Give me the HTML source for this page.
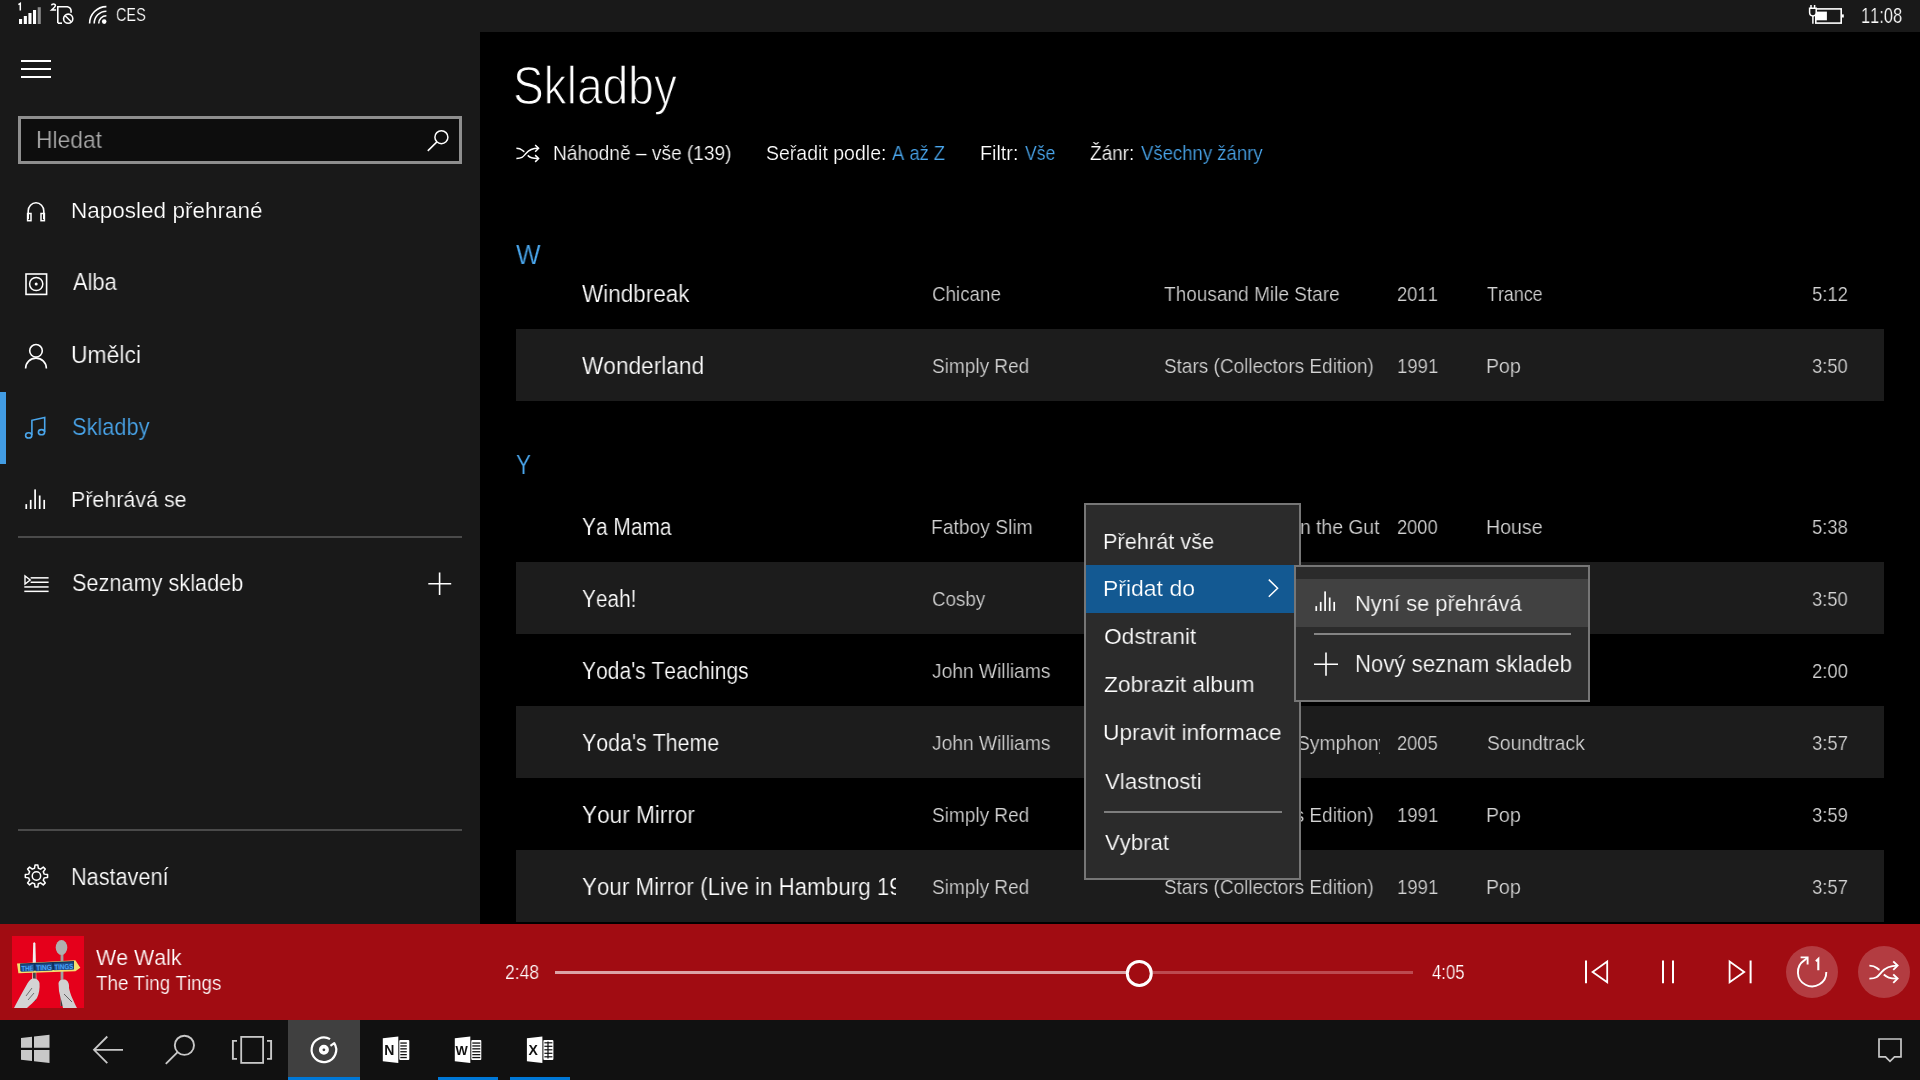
<!DOCTYPE html>
<html><head><meta charset="utf-8"><title>Skladby</title>
<style>
html,body{margin:0;padding:0;}
body{width:1920px;height:1080px;background:#000;position:relative;overflow:hidden;font-family:"Liberation Sans",sans-serif;}
.t{position:absolute;white-space:nowrap;line-height:1;transform-origin:0 0;will-change:transform;font-kerning:none;}
.r{position:absolute;}
.s{position:absolute;overflow:visible;}
.clip{position:absolute;overflow:hidden;}
</style></head><body>
<div class="r" style="left:0px;top:0px;width:1920px;height:32px;background:#191919;"></div>
<div class="r" style="left:0px;top:32px;width:480px;height:892px;background:#191919;"></div>
<div class="r" style="left:0px;top:924px;width:1920px;height:96px;background:#a10c12;"></div>
<div class="r" style="left:0px;top:1020px;width:1920px;height:60px;background:#111111;"></div>
<svg class="s" style="left:0px;top:0px;" width="160" height="32" viewBox="0 0 160 32"><rect x="19" y="19" width="3.1" height="5" fill="#fff"/><rect x="23.8" y="16" width="3.1" height="8" fill="#fff"/><rect x="28.4" y="13" width="3.1" height="11" fill="#fff"/><rect x="33" y="10" width="3.1" height="14" fill="#fff"/><rect x="37.7" y="7.2" width="3.1" height="16.8" fill="#8a8a8a"/><path d="M57.8 23.0 V6.8 H67.4 Q71.1 7.6 71.1 11.2 V12.8" fill="none" stroke="#fff" stroke-width="1.6"/><path d="M57.8 23.2 H62" fill="none" stroke="#fff" stroke-width="1.6"/><circle cx="68.2" cy="18.7" r="4.6" fill="none" stroke="#fff" stroke-width="1.6"/><path d="M65.2 15.7 L71.2 21.7" stroke="#fff" stroke-width="1.6"/><path d="M89.6 23.4 A16.8 16.8 0 0 1 106.4 6.6" fill="none" stroke="#fff" stroke-width="1.6"/><path d="M94.2 23.4 A12.2 12.2 0 0 1 106.4 11.2" fill="none" stroke="#fff" stroke-width="1.6"/><path d="M98.7 23.4 A7.7 7.7 0 0 1 106.4 15.7" fill="none" stroke="#fff" stroke-width="1.6"/><circle cx="104.2" cy="21.6" r="2.3" fill="#fff"/></svg>
<svg class="s" style="left:0px;top:0px;" width="80" height="16" viewBox="0 0 80 16"><path d="M18.4 4.6 L20.3 3.3 V10.5" fill="none" stroke="#fff" stroke-width="1.5"/><path d="M51.5 5.4 C51.8 3.6 55.4 3.3 55.4 5.6 C55.4 7 53.6 8.3 51.6 10 H56.1" fill="none" stroke="#fff" stroke-width="1.5"/></svg>
<div class="t" style="left:115.86px;top:6.12px;font-size:18.17px;color:#fff;transform:scaleX(0.7977);-webkit-text-stroke:0.22px #191919;">CES</div>
<svg class="s" style="left:1800px;top:0px;" width="50" height="32" viewBox="0 0 50 32"><rect x="1815.8" y="8.9" width="25.4" height="14.2" fill="none" stroke="#fff" stroke-width="1.6" transform="translate(-1800 0)"/><rect x="42" y="14.4" width="1.8" height="3.1" fill="#fff"/><rect x="15.3" y="11.6" width="11.6" height="8.7" fill="#fff"/><path d="M9.6 8.2 H16.2 V12.6 A3.3 3.3 0 0 1 9.6 12.6 Z" fill="#191919" stroke="#fff" stroke-width="1.5"/><path d="M11 5 V8.2 M14.6 5 V8.2 M12.9 15.8 V23.8" stroke="#fff" stroke-width="1.5"/></svg>
<div class="t" style="left:1860.75px;top:4.64px;font-size:21.80px;color:#fff;transform:scaleX(0.7546);-webkit-text-stroke:0.22px #191919;">11:08</div>
<div class="r" style="left:21px;top:60px;width:30px;height:2px;background:#fff;"></div>
<div class="r" style="left:21px;top:68px;width:30px;height:2px;background:#fff;"></div>
<div class="r" style="left:21px;top:76px;width:30px;height:2px;background:#fff;"></div>
<div class="r" style="left:18px;top:116px;width:444px;height:48px;background:#0d0d0d;box-sizing:border-box;border:3px solid #8e8e8e;"></div>
<div class="t" style="left:35.63px;top:127.82px;font-size:23.84px;color:#a8a8a8;transform:scaleX(0.9585);-webkit-text-stroke:0.22px #0d0d0d;">Hledat</div>
<svg class="s" style="left:420px;top:120px;" width="40" height="40" viewBox="0 0 40 40"><circle cx="21.4" cy="17.2" r="6.5" fill="none" stroke="#fff" stroke-width="1.5"/><path d="M16.9 21.9 L7.8 30.9" stroke="#fff" stroke-width="1.5"/></svg>
<div class="t" style="left:70.75px;top:200.22px;font-size:22.53px;color:#fff;transform:scaleX(0.9990);-webkit-text-stroke:0.22px #191919;">Naposled přehrané</div>
<div class="t" style="left:72.56px;top:271.24px;font-size:23.69px;color:#fff;transform:scaleX(0.9225);-webkit-text-stroke:0.22px #191919;">Alba</div>
<div class="t" style="left:70.83px;top:342.69px;font-size:23.98px;color:#fff;transform:scaleX(0.9554);-webkit-text-stroke:0.22px #191919;">Umělci</div>
<div class="t" style="left:71.61px;top:414.82px;font-size:23.84px;color:#4aa6ec;transform:scaleX(0.9155);-webkit-text-stroke:0.22px #191919;">Skladby</div>
<div class="t" style="left:70.84px;top:487.68px;font-size:22.82px;color:#fff;transform:scaleX(0.9397);-webkit-text-stroke:0.22px #191919;">Přehrává se</div>
<div class="r" style="left:0px;top:392px;width:6px;height:72px;background:#429ce3;"></div>
<svg class="s" style="left:16px;top:190px;" width="40" height="40" viewBox="0 0 40 40"><path d="M12.2 29 V21 A7.8 8.2 0 0 1 27.8 21 V29" fill="none" stroke="#fff" stroke-width="1.6"/><rect x="11.6" y="23.5" width="3.4" height="7.2" fill="none" stroke="#fff" stroke-width="1.5"/><rect x="25" y="23.5" width="3.4" height="7.2" fill="none" stroke="#fff" stroke-width="1.5"/></svg>
<svg class="s" style="left:16px;top:264px;" width="40" height="40" viewBox="0 0 40 40"><rect x="10" y="10" width="20.6" height="20.4" fill="none" stroke="#fff" stroke-width="1.6"/><circle cx="20.2" cy="20" r="6.6" fill="none" stroke="#fff" stroke-width="1.5"/><circle cx="20.2" cy="20" r="1.5" fill="#fff"/></svg>
<svg class="s" style="left:16px;top:336px;" width="40" height="40" viewBox="0 0 40 40"><circle cx="20" cy="14.8" r="6.3" fill="none" stroke="#fff" stroke-width="1.6"/><path d="M9.6 32.5 A10.4 10.4 0 0 1 30.4 32.5" fill="none" stroke="#fff" stroke-width="1.6"/></svg>
<svg class="s" style="left:16px;top:408px;" width="40" height="40" viewBox="0 0 40 40"><path d="M15.9 27 V12.3 L28.7 9.4 V24" fill="none" stroke="#4aa6ec" stroke-width="1.6"/><ellipse cx="12.7" cy="27.4" rx="3.1" ry="2.6" fill="none" stroke="#4aa6ec" stroke-width="1.6"/><ellipse cx="25.5" cy="24.2" rx="3.1" ry="2.6" fill="none" stroke="#4aa6ec" stroke-width="1.6"/></svg>
<svg class="s" style="left:20px;top:483px;" width="30" height="30" viewBox="0 0 30 30"><rect x="5.40" y="21.10" width="1.7" height="4.90" fill="#fff"/><rect x="9.85" y="16.90" width="1.7" height="9.10" fill="#fff"/><rect x="14.25" y="6.40" width="1.7" height="19.60" fill="#fff"/><rect x="18.85" y="12.50" width="1.7" height="13.50" fill="#fff"/><rect x="23.35" y="16.90" width="1.7" height="9.10" fill="#fff"/></svg>
<div class="r" style="left:18px;top:536px;width:444px;height:2px;background:#4a4a4a;"></div>
<div class="t" style="left:71.61px;top:571.37px;font-size:24.13px;color:#fff;transform:scaleX(0.8995);-webkit-text-stroke:0.22px #191919;">Seznamy skladeb</div>
<svg class="s" style="left:16px;top:560px;" width="40" height="40" viewBox="0 0 40 40"><path d="M9 16 V24 L14.2 20 Z" fill="none" stroke="#fff" stroke-width="1.4"/><rect x="14.6" y="17.1" width="18" height="1.5" fill="#fff"/><rect x="14.6" y="21.5" width="18" height="1.5" fill="#fff"/><rect x="8.3" y="26.2" width="24.3" height="1.5" fill="#fff"/><rect x="8.3" y="30.6" width="24.3" height="1.5" fill="#fff"/></svg>
<svg class="s" style="left:420px;top:564px;" width="40" height="40" viewBox="0 0 40 40"><path d="M19.6 8.5 V31 M8.3 19.8 H31.2" stroke="#fff" stroke-width="1.6"/></svg>
<div class="r" style="left:18px;top:829px;width:444px;height:2px;background:#4a4a4a;"></div>
<div class="t" style="left:71.02px;top:864.69px;font-size:23.98px;color:#fff;transform:scaleX(0.9047);-webkit-text-stroke:0.22px #191919;">Nastavení</div>
<svg class="s" style="left:16px;top:856px;" width="40" height="40" viewBox="0 0 40 40"><path d="M18.57 12.22 L19.04 8.89 L21.84 8.89 L22.31 12.22 L24.62 13.18 L27.30 11.15 L29.29 13.14 L27.26 15.82 L28.22 18.13 L31.55 18.60 L31.55 21.40 L28.22 21.87 L27.26 24.18 L29.29 26.86 L27.30 28.85 L24.62 26.82 L22.31 27.78 L21.84 31.11 L19.04 31.11 L18.57 27.78 L16.26 26.82 L13.58 28.85 L11.59 26.86 L13.62 24.18 L12.66 21.87 L9.33 21.40 L9.33 18.60 L12.66 18.13 L13.62 15.82 L11.59 13.14 L13.58 11.15 L16.26 13.18 Z" fill="none" stroke="#fff" stroke-width="1.5" stroke-linejoin="round"/><circle cx="20.44" cy="20" r="4.2" fill="none" stroke="#fff" stroke-width="1.5"/></svg>
<div class="t" style="left:512.86px;top:58.70px;font-size:54.51px;color:#ffffff;transform:scaleX(0.8451);-webkit-text-stroke:1.3px #000;">Skladby</div>
<svg class="s" style="left:500px;top:130px;" width="50" height="40" viewBox="0 0 50 40"><path d="M16.40 28.50 C22.62 28.50 23.28 26.47 25.95 23.43 C28.61 20.38 31.94 18.35 38.00 18.35" fill="none" stroke="#fff" stroke-width="1.5"/><path d="M16.40 18.35 C21.95 18.35 21.51 20.38 24.39 21.70 M27.72 25.35 C30.39 27.69 31.94 28.50 38.00 28.50" fill="none" stroke="#fff" stroke-width="1.5"/><path d="M35.16 15.00 L38.60 18.35 L35.16 21.70 M35.16 25.15 L38.60 28.50 L35.16 31.85" fill="none" stroke="#fff" stroke-width="1.5"/></svg>
<div class="t" style="left:552.93px;top:144.11px;font-size:19.48px;color:#fff;transform:scaleX(0.9816);-webkit-text-stroke:0.22px #000;">Náhodně – vše (139)</div>
<div class="t" style="left:765.91px;top:144.11px;font-size:19.48px;color:#fff;transform:scaleX(1.0023);-webkit-text-stroke:0.22px #000;">Seřadit podle:</div>
<div class="t" style="left:892.46px;top:144.11px;font-size:19.48px;color:#4aa6ec;transform:scaleX(0.9437);-webkit-text-stroke:0.22px #000;">A až Z</div>
<div class="t" style="left:979.88px;top:144.11px;font-size:19.48px;color:#fff;transform:scaleX(1.0150);-webkit-text-stroke:0.22px #000;">Filtr:</div>
<div class="t" style="left:1025.12px;top:144.11px;font-size:19.48px;color:#4aa6ec;transform:scaleX(0.9016);-webkit-text-stroke:0.22px #000;">Vše</div>
<div class="t" style="left:1090.40px;top:144.11px;font-size:19.48px;color:#fff;transform:scaleX(0.9753);-webkit-text-stroke:0.22px #000;">Žánr:</div>
<div class="t" style="left:1141.42px;top:144.11px;font-size:19.48px;color:#4aa6ec;transform:scaleX(0.9521);-webkit-text-stroke:0.22px #000;">Všechny žánry</div>
<div class="t" style="left:515.99px;top:241.46px;font-size:27.33px;color:#4aa6ec;transform:scaleX(0.9500);-webkit-text-stroke:0.22px #000;">W</div>
<div class="t" style="left:515.51px;top:452.13px;font-size:26.89px;color:#4aa6ec;transform:scaleX(0.8356);-webkit-text-stroke:0.22px #000;">Y</div>
<div class="t" style="left:582.10px;top:281.59px;font-size:23.98px;color:#fff;transform:scaleX(0.9384);-webkit-text-stroke:0.22px #000;">Windbreak</div>
<div class="t" style="left:931.55px;top:283.70px;font-size:20.78px;color:#d4d4d4;transform:scaleX(0.9033);-webkit-text-stroke:0.22px #000;">Chicane</div>
<div class="t" style="left:1164.17px;top:283.70px;font-size:20.78px;color:#d4d4d4;transform:scaleX(0.9171);-webkit-text-stroke:0.22px #000;">Thousand Mile Stare</div>
<div class="t" style="left:1397.08px;top:283.70px;font-size:20.78px;color:#d4d4d4;transform:scaleX(0.8828);-webkit-text-stroke:0.22px #000;">2011</div>
<div class="t" style="left:1487.10px;top:283.70px;font-size:20.78px;color:#d4d4d4;transform:scaleX(0.8610);-webkit-text-stroke:0.22px #000;">Trance</div>
<div class="t" style="left:1812.06px;top:283.70px;font-size:20.78px;color:#d4d4d4;transform:scaleX(0.8917);-webkit-text-stroke:0.22px #000;">5:12</div>
<div class="r" style="left:516px;top:329px;width:1368px;height:72px;background:#1c1c1c;"></div>
<div class="t" style="left:582.10px;top:353.59px;font-size:23.98px;color:#fff;transform:scaleX(0.9447);-webkit-text-stroke:0.22px #1c1c1c;">Wonderland</div>
<div class="t" style="left:931.63px;top:355.70px;font-size:20.78px;color:#d4d4d4;transform:scaleX(0.9165);-webkit-text-stroke:0.22px #1c1c1c;">Simply Red</div>
<div class="t" style="left:1163.74px;top:355.70px;font-size:20.78px;color:#d4d4d4;transform:scaleX(0.9133);-webkit-text-stroke:0.22px #1c1c1c;">Stars (Collectors Edition)</div>
<div class="t" style="left:1396.59px;top:355.70px;font-size:20.78px;color:#d4d4d4;transform:scaleX(0.8937);-webkit-text-stroke:0.22px #1c1c1c;">1991</div>
<div class="t" style="left:1485.90px;top:355.70px;font-size:20.78px;color:#d4d4d4;transform:scaleX(0.9388);-webkit-text-stroke:0.22px #1c1c1c;">Pop</div>
<div class="t" style="left:1812.10px;top:355.70px;font-size:20.78px;color:#d4d4d4;transform:scaleX(0.8855);-webkit-text-stroke:0.22px #1c1c1c;">3:50</div>
<div class="t" style="left:581.74px;top:514.59px;font-size:23.98px;color:#fff;transform:scaleX(0.8727);-webkit-text-stroke:0.22px #000;">Ya Mama</div>
<div class="t" style="left:930.92px;top:516.70px;font-size:20.78px;color:#d4d4d4;transform:scaleX(0.9282);-webkit-text-stroke:0.22px #000;">Fatboy Slim</div>
<div class="clip" style="left:1280px;top:490px;width:100px;height:72px;">
<div class="t" style="left:20.22px;top:26.70px;font-size:20.78px;color:#d4d4d4;transform:scaleX(0.9300);-webkit-text-stroke:0.22px #000;">n the Gutter</div>
</div>
<div class="t" style="left:1397.08px;top:516.70px;font-size:20.78px;color:#d4d4d4;transform:scaleX(0.8788);-webkit-text-stroke:0.22px #000;">2000</div>
<div class="t" style="left:1485.89px;top:516.70px;font-size:20.78px;color:#d4d4d4;transform:scaleX(0.9434);-webkit-text-stroke:0.22px #000;">House</div>
<div class="t" style="left:1812.06px;top:516.70px;font-size:20.78px;color:#d4d4d4;transform:scaleX(0.8885);-webkit-text-stroke:0.22px #000;">5:38</div>
<div class="r" style="left:516px;top:562px;width:1368px;height:72px;background:#1c1c1c;"></div>
<div class="t" style="left:581.74px;top:586.59px;font-size:23.98px;color:#fff;transform:scaleX(0.8688);-webkit-text-stroke:0.22px #1c1c1c;">Yeah!</div>
<div class="t" style="left:931.55px;top:588.70px;font-size:20.78px;color:#d4d4d4;transform:scaleX(0.9028);-webkit-text-stroke:0.22px #1c1c1c;">Cosby</div>
<div class="t" style="left:1812.10px;top:588.70px;font-size:20.78px;color:#d4d4d4;transform:scaleX(0.8855);-webkit-text-stroke:0.22px #1c1c1c;">3:50</div>
<div class="t" style="left:581.74px;top:658.59px;font-size:23.98px;color:#fff;transform:scaleX(0.8780);-webkit-text-stroke:0.22px #000;">Yoda's Teachings</div>
<div class="t" style="left:932.20px;top:660.70px;font-size:20.78px;color:#d4d4d4;transform:scaleX(0.9243);-webkit-text-stroke:0.22px #000;">John Williams</div>
<div class="t" style="left:1811.87px;top:660.70px;font-size:20.78px;color:#d4d4d4;transform:scaleX(0.8913);-webkit-text-stroke:0.22px #000;">2:00</div>
<div class="r" style="left:516px;top:706px;width:1368px;height:72px;background:#1c1c1c;"></div>
<div class="t" style="left:581.73px;top:730.59px;font-size:23.98px;color:#fff;transform:scaleX(0.8917);-webkit-text-stroke:0.22px #1c1c1c;">Yoda's Theme</div>
<div class="t" style="left:932.20px;top:732.70px;font-size:20.78px;color:#d4d4d4;transform:scaleX(0.9243);-webkit-text-stroke:0.22px #1c1c1c;">John Williams</div>
<div class="clip" style="left:1280px;top:706px;width:100px;height:72px;">
<div class="t" style="left:16.62px;top:26.70px;font-size:20.78px;color:#d4d4d4;transform:scaleX(0.9300);-webkit-text-stroke:0.22px #1c1c1c;">Symphony No. 1</div>
</div>
<div class="t" style="left:1397.08px;top:732.70px;font-size:20.78px;color:#d4d4d4;transform:scaleX(0.8800);-webkit-text-stroke:0.22px #1c1c1c;">2005</div>
<div class="t" style="left:1486.62px;top:732.70px;font-size:20.78px;color:#d4d4d4;transform:scaleX(0.9306);-webkit-text-stroke:0.22px #1c1c1c;">Soundtrack</div>
<div class="t" style="left:1812.09px;top:732.70px;font-size:20.78px;color:#d4d4d4;transform:scaleX(0.8908);-webkit-text-stroke:0.22px #1c1c1c;">3:57</div>
<div class="t" style="left:581.70px;top:802.59px;font-size:23.98px;color:#fff;transform:scaleX(0.9429);-webkit-text-stroke:0.22px #000;">Your Mirror</div>
<div class="t" style="left:931.63px;top:804.70px;font-size:20.78px;color:#d4d4d4;transform:scaleX(0.9165);-webkit-text-stroke:0.22px #000;">Simply Red</div>
<div class="t" style="left:1163.74px;top:804.70px;font-size:20.78px;color:#d4d4d4;transform:scaleX(0.9133);-webkit-text-stroke:0.22px #000;">Stars (Collectors Edition)</div>
<div class="t" style="left:1396.59px;top:804.70px;font-size:20.78px;color:#d4d4d4;transform:scaleX(0.8937);-webkit-text-stroke:0.22px #000;">1991</div>
<div class="t" style="left:1485.90px;top:804.70px;font-size:20.78px;color:#d4d4d4;transform:scaleX(0.9388);-webkit-text-stroke:0.22px #000;">Pop</div>
<div class="t" style="left:1812.10px;top:804.70px;font-size:20.78px;color:#d4d4d4;transform:scaleX(0.8894);-webkit-text-stroke:0.22px #000;">3:59</div>
<div class="r" style="left:516px;top:850px;width:1368px;height:72px;background:#1c1c1c;"></div>
<div class="clip" style="left:560px;top:850px;width:336px;height:72px;">
<div class="t" style="left:21.71px;top:24.59px;font-size:23.98px;color:#fff;transform:scaleX(0.9338);-webkit-text-stroke:0.22px #1c1c1c;">Your Mirror (Live in Hamburg 19</div>
</div>
<div class="t" style="left:931.63px;top:876.70px;font-size:20.78px;color:#d4d4d4;transform:scaleX(0.9165);-webkit-text-stroke:0.22px #1c1c1c;">Simply Red</div>
<div class="t" style="left:1163.74px;top:876.70px;font-size:20.78px;color:#d4d4d4;transform:scaleX(0.9133);-webkit-text-stroke:0.22px #1c1c1c;">Stars (Collectors Edition)</div>
<div class="t" style="left:1396.59px;top:876.70px;font-size:20.78px;color:#d4d4d4;transform:scaleX(0.8937);-webkit-text-stroke:0.22px #1c1c1c;">1991</div>
<div class="t" style="left:1485.90px;top:876.70px;font-size:20.78px;color:#d4d4d4;transform:scaleX(0.9388);-webkit-text-stroke:0.22px #1c1c1c;">Pop</div>
<div class="t" style="left:1812.09px;top:876.70px;font-size:20.78px;color:#d4d4d4;transform:scaleX(0.8908);-webkit-text-stroke:0.22px #1c1c1c;">3:57</div>
<div class="r" style="left:1084px;top:503px;width:217px;height:377px;background:#2b2b2b;box-sizing:border-box;border:2px solid #767676;"></div>
<div class="r" style="left:1086px;top:565px;width:209px;height:48px;background:#135992;"></div>
<div class="t" style="left:1103.22px;top:529.56px;font-size:22.97px;color:#fff;transform:scaleX(0.9457);-webkit-text-stroke:0.22px #2b2b2b;">Přehrát vše</div>
<div class="t" style="left:1103.12px;top:577.36px;font-size:22.97px;color:#fff;transform:scaleX(0.9992);-webkit-text-stroke:0.22px #135992;">Přidat do</div>
<div class="t" style="left:1103.92px;top:625.36px;font-size:22.97px;color:#fff;transform:scaleX(0.9900);-webkit-text-stroke:0.22px #2b2b2b;">Odstranit</div>
<div class="t" style="left:1104.28px;top:673.26px;font-size:22.97px;color:#fff;transform:scaleX(0.9910);-webkit-text-stroke:0.22px #2b2b2b;">Zobrazit album</div>
<div class="t" style="left:1103.24px;top:721.36px;font-size:22.97px;color:#fff;transform:scaleX(0.9923);-webkit-text-stroke:0.22px #2b2b2b;">Upravit informace</div>
<div class="t" style="left:1104.90px;top:769.56px;font-size:22.97px;color:#fff;transform:scaleX(0.9702);-webkit-text-stroke:0.22px #2b2b2b;">Vlastnosti</div>
<div class="t" style="left:1104.90px;top:831.36px;font-size:22.97px;color:#fff;transform:scaleX(0.9636);-webkit-text-stroke:0.22px #2b2b2b;">Vybrat</div>
<div class="r" style="left:1104px;top:811px;width:178px;height:2px;background:#7e7e7e;"></div>
<svg class="s" style="left:1260px;top:570px;" width="30" height="36" viewBox="0 0 30 36"><path d="M8.8 9.6 L17.6 18.2 L8.8 26.8" fill="none" stroke="#fff" stroke-width="1.5"/></svg>
<div class="r" style="left:1294px;top:565px;width:296px;height:137px;background:#2b2b2b;box-sizing:border-box;border:2px solid #767676;"></div>
<div class="r" style="left:1296px;top:579px;width:292px;height:48px;background:#414141;"></div>
<div class="r" style="left:1314px;top:633px;width:257px;height:2px;background:#848484;"></div>
<div class="t" style="left:1354.90px;top:591.60px;font-size:22.67px;color:#fff;transform:scaleX(0.9660);-webkit-text-stroke:0.22px #414141;">Nyní se přehrává</div>
<div class="t" style="left:1354.88px;top:653.24px;font-size:23.69px;color:#fff;transform:scaleX(0.9365);-webkit-text-stroke:0.22px #2b2b2b;">Nový seznam skladeb</div>
<svg class="s" style="left:1310px;top:585px;" width="30" height="30" viewBox="0 0 30 30"><rect x="5.40" y="21.10" width="1.7" height="4.90" fill="#fff"/><rect x="9.85" y="16.90" width="1.7" height="9.10" fill="#fff"/><rect x="14.25" y="6.40" width="1.7" height="19.60" fill="#fff"/><rect x="18.85" y="12.50" width="1.7" height="13.50" fill="#fff"/><rect x="23.35" y="16.90" width="1.7" height="9.10" fill="#fff"/></svg>
<svg class="s" style="left:1300px;top:644px;" width="40" height="40" viewBox="0 0 40 40"><path d="M26 8.5 V31.8 M14 20.2 H38" stroke="#fff" stroke-width="1.6"/></svg>
<div class="t" style="left:96.21px;top:947.02px;font-size:22.53px;color:#fff;transform:scaleX(0.9506);-webkit-text-stroke:0.22px #a10c12;">We Walk</div>
<div class="t" style="left:95.88px;top:973.42px;font-size:20.06px;color:#fff;transform:scaleX(0.9374);-webkit-text-stroke:0.22px #a10c12;">The Ting Tings</div>
<div class="t" style="left:504.62px;top:962.71px;font-size:19.48px;color:#fff;transform:scaleX(0.9007);-webkit-text-stroke:0.22px #a10c12;">2:48</div>
<div class="t" style="left:1432.12px;top:962.71px;font-size:19.48px;color:#fff;transform:scaleX(0.8597);-webkit-text-stroke:0.22px #a10c12;">4:05</div>
<div class="r" style="left:555px;top:971px;width:571px;height:3px;background:#dba3a6;"></div>
<div class="r" style="left:1153px;top:971px;width:260px;height:3px;background:#bc4a50;"></div>
<svg class="s" style="left:1120px;top:954px;" width="40" height="40" viewBox="0 0 40 40"><circle cx="19.3" cy="19.4" r="12" fill="#a10c12" stroke="#fff" stroke-width="3"/></svg>
<svg class="s" style="left:1570px;top:945px;" width="200" height="55" viewBox="0 0 200 55"><path d="M16 15.5 V38.3" stroke="#fff" stroke-width="2"/><path d="M37.2 16.5 V37.3 L22.6 27 Z" fill="none" stroke="#fff" stroke-width="1.8" stroke-linejoin="miter"/><path d="M93 15.5 V38.3 M103 15.5 V38.3" stroke="#fff" stroke-width="2"/><path d="M159.6 16.5 V37.3 L174.2 27 Z" fill="none" stroke="#fff" stroke-width="1.8"/><path d="M180.6 15.5 V38.3" stroke="#fff" stroke-width="2"/></svg>
<div class="r" style="left:1786px;top:946px;width:52px;height:52px;border-radius:50%;background:rgba(255,255,255,0.2);"></div>
<div class="r" style="left:1858px;top:946px;width:52px;height:52px;border-radius:50%;background:rgba(255,255,255,0.2);"></div>
<svg class="s" style="left:1786px;top:946px;" width="52" height="52" viewBox="0 0 52 52"><path d="M40.3 26 A14.2 14.2 0 1 1 18.2 14.4 L21.4 11.6" fill="none" stroke="#fff" stroke-width="1.9"/><path d="M14.6 11.4 H21.6 V18.6" fill="none" stroke="#fff" stroke-width="1.9"/><path d="M29.9 15.2 L32.3 13 V24.2" fill="none" stroke="#fff" stroke-width="2.1"/></svg>
<svg class="s" style="left:1858px;top:946px;" width="52" height="52" viewBox="0 0 52 52"><path d="M11.40 32.60 C19.30 32.60 20.14 30.00 23.53 26.10 C26.91 22.20 31.14 19.60 39.00 19.60" fill="none" stroke="#fff" stroke-width="1.9"/><path d="M11.40 19.60 C18.45 19.60 17.89 22.20 21.55 23.89 M25.78 28.57 C29.17 31.56 31.14 32.60 39.00 32.60" fill="none" stroke="#fff" stroke-width="1.9"/><path d="M35.23 15.31 L39.60 19.60 L35.23 23.89 M35.23 28.31 L39.60 32.60 L35.23 36.89" fill="none" stroke="#fff" stroke-width="1.9"/></svg>
<div class="r" style="left:12px;top:936px;width:72px;height:72px;background:#e5001b;overflow:hidden;"><svg width="72" height="72" viewBox="0 0 72 72"><path d="M20.2 46 L21.2 7.5 Q22.3 4.8 23.4 7.5 L24.4 46 Z" fill="#f0f0f0"/><rect x="21" y="35" width="2.8" height="30" fill="#444"/><rect x="48.6" y="18" width="2.8" height="52" fill="#a0a0a0"/><rect x="48.8" y="45" width="2.4" height="25" fill="#3a3a3a"/><ellipse cx="49.5" cy="11.5" rx="5.8" ry="7.6" fill="#b0b0b0"/><path d="M5 27.5 L63.4 24.3 L68.3 31.7 L63.4 35.2 L6.4 37.3 Z" fill="#f2e070"/><path d="M8.1 27.6 L62 25 L62 33.3 L8.4 35.2 Z" fill="#10305a"/><g transform="rotate(-2.5 36 30)" font-family="Liberation Sans" font-weight="bold" font-size="7.4" fill="#4aa8ff"><rect x="9" y="27.4" width="12.8" height="7.2" fill="#1d4a86"/><rect x="23.6" y="27.4" width="16.6" height="7.2" fill="#1d4a86"/><rect x="42" y="27.4" width="19.5" height="7.2" fill="#1d4a86"/><text x="9.4" y="34" textLength="12" lengthAdjust="spacingAndGlyphs">THE</text><text x="24" y="34" textLength="15.8" lengthAdjust="spacingAndGlyphs">TING</text><text x="42.4" y="34" textLength="18.8" lengthAdjust="spacingAndGlyphs">TINGS</text></g><path d="M2 72 C6 64 10 57 14 50 C16 46 18 43 21 42.5 C24 42 27 44 27.5 47 C28 52 27 58 25 62 C22 66 18 69 15 72 Z" fill="#d4d4d4"/><path d="M14 60 L20 52 M16 64 L22 57" stroke="#555" stroke-width="0.8"/><path d="M46.5 47 C47 44 50 43 53 43.5 C56 44.5 57.5 48 57 52 C58 58 62 66 65 72 L51 72 C50 66 48 60 47 55 Z" fill="#d0d0d0"/><path d="M52 58 L60 66" stroke="#555" stroke-width="0.9"/></svg></div>
<div class="r" style="left:288px;top:1020px;width:72px;height:60px;background:#404040;"></div>
<div class="r" style="left:288px;top:1077px;width:72px;height:3px;background:#0078d7;"></div>
<div class="r" style="left:438px;top:1077px;width:60px;height:3px;background:#0078d7;"></div>
<div class="r" style="left:510px;top:1077px;width:60px;height:3px;background:#0078d7;"></div>
<svg class="s" style="left:0px;top:1020px;" width="300" height="60" viewBox="0 0 300 60"><path d="M21 18 L32 16.77 V27.8 H21 Z M34 16.54 L49.5 14.8 V27.8 H34 Z M21 30 H32 V41.03 L21 39.8 Z M34 30 H49.5 V43 L34 41.26 Z" fill="#c8c8c8"/><path d="M107.3 16.5 L94 29.8 L107.3 43.1 M94 29.8 H123" fill="none" stroke="#c8c8c8" stroke-width="1.8"/><circle cx="184.4" cy="25.3" r="9.6" fill="none" stroke="#c8c8c8" stroke-width="1.9"/><path d="M177.6 32.1 L165.8 43.9" stroke="#c8c8c8" stroke-width="1.9"/><rect x="241.2" y="16.9" width="21.9" height="26" fill="none" stroke="#c8c8c8" stroke-width="1.8"/><path d="M237 20.9 H232.9 V38.9 H237 M267 20.9 H271.1 V38.9 H267" fill="none" stroke="#c8c8c8" stroke-width="1.9"/></svg>
<svg class="s" style="left:288px;top:1020px;" width="72" height="60" viewBox="0 0 72 60"><path d="M42.05 19.15 A12.3 12.3 0 1 0 46.22 23.10 L42.42 25.80" fill="none" stroke="#fff" stroke-width="2.2" stroke-linejoin="round"/><circle cx="35.9" cy="29.8" r="3.2" fill="none" stroke="#fff" stroke-width="3.6"/></svg>
<svg class="s" style="left:0;top:0" width="1920" height="1080" viewBox="0 0 1920 1080"><path d="M382.8 1038.2 L398.3 1036.6 V1063 L382.8 1061.2 Z" fill="#fff"/><rect x="399.3" y="1040" width="10" height="20" fill="#fff" rx="1"/><rect x="400.3" y="1042.4" width="6.5" height="1.3" fill="#111"/><rect x="400.3" y="1045.3" width="6.5" height="1.3" fill="#111"/><rect x="400.3" y="1048.2" width="6.5" height="1.3" fill="#111"/><rect x="400.3" y="1051.1" width="6.5" height="1.3" fill="#111"/><rect x="400.3" y="1054.0" width="6.5" height="1.3" fill="#111"/><rect x="400.3" y="1056.9" width="6.5" height="1.3" fill="#111"/><path d="M454.8 1038.2 L470.3 1036.6 V1063 L454.8 1061.2 Z" fill="#fff"/><rect x="471.3" y="1040" width="10" height="20" fill="#fff" rx="1"/><rect x="472.3" y="1042.4" width="8" height="1.3" fill="#111"/><rect x="472.3" y="1045.3" width="8" height="1.3" fill="#111"/><rect x="472.3" y="1048.2" width="8" height="1.3" fill="#111"/><rect x="472.3" y="1051.1" width="8" height="1.3" fill="#111"/><rect x="472.3" y="1054.0" width="8" height="1.3" fill="#111"/><rect x="472.3" y="1056.9" width="8" height="1.3" fill="#111"/><path d="M526.9 1038.2 L542.4 1036.6 V1063 L526.9 1061.2 Z" fill="#fff"/><rect x="543.4" y="1040" width="10" height="20" fill="#fff" rx="1"/><rect x="544.4" y="1042.2" width="8" height="1.2" fill="#111"/><rect x="544.4" y="1045.7" width="8" height="1.2" fill="#111"/><rect x="544.4" y="1049.2" width="8" height="1.2" fill="#111"/><rect x="544.4" y="1052.7" width="8" height="1.2" fill="#111"/><rect x="544.4" y="1056.2" width="8" height="1.2" fill="#111"/><rect x="547.4" y="1041.5" width="1.2" height="17" fill="#111"/><text x="384.2" y="1054.5" font-size="14" font-weight="bold" fill="#111" font-family="Liberation Sans">N</text><text x="455.6" y="1054.5" font-size="13" font-weight="bold" fill="#111" font-family="Liberation Sans">W</text><text x="528.6" y="1054.5" font-size="14" font-weight="bold" fill="#111" font-family="Liberation Sans">X</text><path d="M1879 1039 H1901 V1056.8 H1894.5 L1890 1061.3 L1885.5 1056.8 H1879 Z" fill="none" stroke="#c8c8c8" stroke-width="1.7"/></svg>
</body></html>
